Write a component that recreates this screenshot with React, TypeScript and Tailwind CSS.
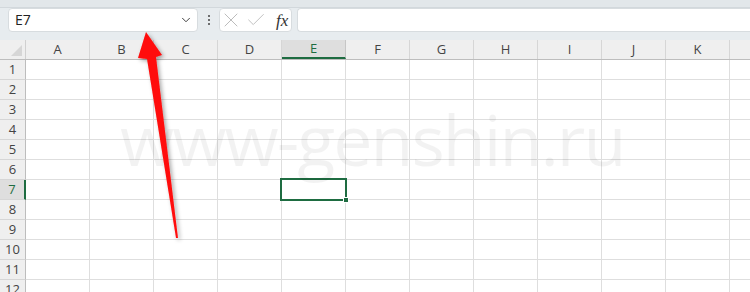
import React from "react";
import { ChevronDown, X, Check } from "lucide-react";

const columns = ["A", "B", "C", "D", "E", "F", "G", "H", "I", "J", "K", ""];
const rows = [1, 2, 3, 4, 5, 6, 7, 8, 9, 10, 11, 12];

const ACTIVE_COL = "E";
const ACTIVE_ROW = 7;

const App: React.FC = () => {
  return (
    <div
      className="relative w-[750px] h-[292px] overflow-hidden bg-white"
      style={{ fontFamily: '"Open Sans", "Noto Sans", sans-serif' }}
    >
      {/* top strip */}
      <div className="h-[8px] bg-[#e2e7ea] border-b border-[#d2d8dc]" />

      {/* formula bar */}
      <div className="h-[32px] bg-[#e7ecef] flex items-start">
        <div className="ml-[8px] w-[190px] shrink-0 h-[24px] bg-white rounded-[4px] border border-[#d7dcdf] flex items-center pl-[6px] pr-[4px]">
          <span className="text-[14px] text-[#222] flex-1 leading-none">E7</span>
          <ChevronDown size={14} strokeWidth={1.6} className="text-[#333]" />
        </div>
        <div className="w-[21px] shrink-0 h-[24px] flex flex-col items-center justify-center gap-[2px]">
          <span className="w-[2px] h-[2px] bg-[#444] rounded-full" />
          <span className="w-[2px] h-[2px] bg-[#444] rounded-full" />
          <span className="w-[2px] h-[2px] bg-[#444] rounded-full" />
        </div>
        <div className="w-[73px] shrink-0 h-[24px] bg-white rounded-[4px] border border-[#d7dcdf] flex items-center">
          <X size={24} strokeWidth={0.9} className="text-[#b4b4b4] -ml-[1px]" />
          <Check size={22} strokeWidth={0.9} className="text-[#b4b4b4] ml-[2px]" />
          <span
            className="ml-[9px] text-[17px] italic text-[#333] leading-none"
            style={{ fontFamily: '"Liberation Serif", serif' }}
          >
            fx
          </span>
        </div>
        <div className="ml-[5px] flex-1 h-[24px] bg-white rounded-l-[4px] border border-r-0 border-[#d7dcdf]" />
      </div>

      {/* column headers */}
      <div className="flex h-[20px] bg-[#efefef] border-b border-[#bdbdbd]">
        <div className="relative w-[26px] shrink-0 h-full border-r border-[#d0d0d0]">
          <div className="absolute right-[3px] bottom-[3px] w-0 h-0 border-l-[11px] border-l-transparent border-b-[11px] border-b-[#d6d6d6]" />
        </div>
        {columns.map((c, i) => (
          <div
            key={i}
            className={
              c === ACTIVE_COL
                ? "w-[64px] shrink-0 h-[19px] bg-[#dedede] border-r border-[#c6c6c6] border-b-2 border-b-[#1e6c41] flex items-center justify-center text-[13px] text-[#1e6c41]"
                : "w-[64px] shrink-0 h-full border-r border-[#d6d6d6] flex items-center justify-center text-[13px] text-[#444]"
            }
          >
            {c}
          </div>
        ))}
      </div>

      {/* rows */}
      {rows.map((r) => (
        <div key={r} className="flex h-[20px]">
          <div
            className={
              r === ACTIVE_ROW
                ? "w-[26px] shrink-0 h-full bg-[#dedede] border-r-2 border-[#1e6c41] border-b border-b-[#d6d6d6] flex items-center justify-center text-[13px] text-[#1e6c41]"
                : "w-[26px] shrink-0 h-full bg-[#efefef] border-r border-[#bdbdbd] border-b border-b-[#d6d6d6] flex items-center justify-center text-[13px] text-[#444]"
            }
          >
            {r}
          </div>
          {columns.map((c, i) => (
            <div key={i} className="w-[64px] shrink-0 h-full border-r border-b border-[#dedede]" />
          ))}
        </div>
      ))}

      {/* active cell */}
      <div className="absolute left-[280px] top-[178px] w-[67px] h-[23px] border-2 border-[#1e6c41]">
        <div className="absolute -right-[4px] -bottom-[4px] w-[6px] h-[6px] bg-[#1e6c41] border border-white" />
      </div>

      {/* watermark */}
      <div
        className="absolute left-[120px] top-[104px] text-[70px] leading-none tracking-[-2px] text-black/[0.05] pointer-events-none select-none whitespace-nowrap"
        style={{ fontFamily: '"Open Sans", sans-serif' }}
      >
        www-genshin.ru
      </div>

      {/* red arrow */}
      <svg className="absolute left-0 top-0 pointer-events-none" width="750" height="292">
        <defs>
          <filter id="sh" x="-50%" y="-50%" width="200%" height="200%">
            <feDropShadow dx="2" dy="2" stdDeviation="2" floodColor="#000" floodOpacity="0.35" />
          </filter>
        </defs>
        <polygon
          points="146,32 162,55 156,57 178,238 176,238 147,59 138,58"
          fill="#ff0a0a"
          filter="url(#sh)"
        />
      </svg>
    </div>
  );
};

export default App;
